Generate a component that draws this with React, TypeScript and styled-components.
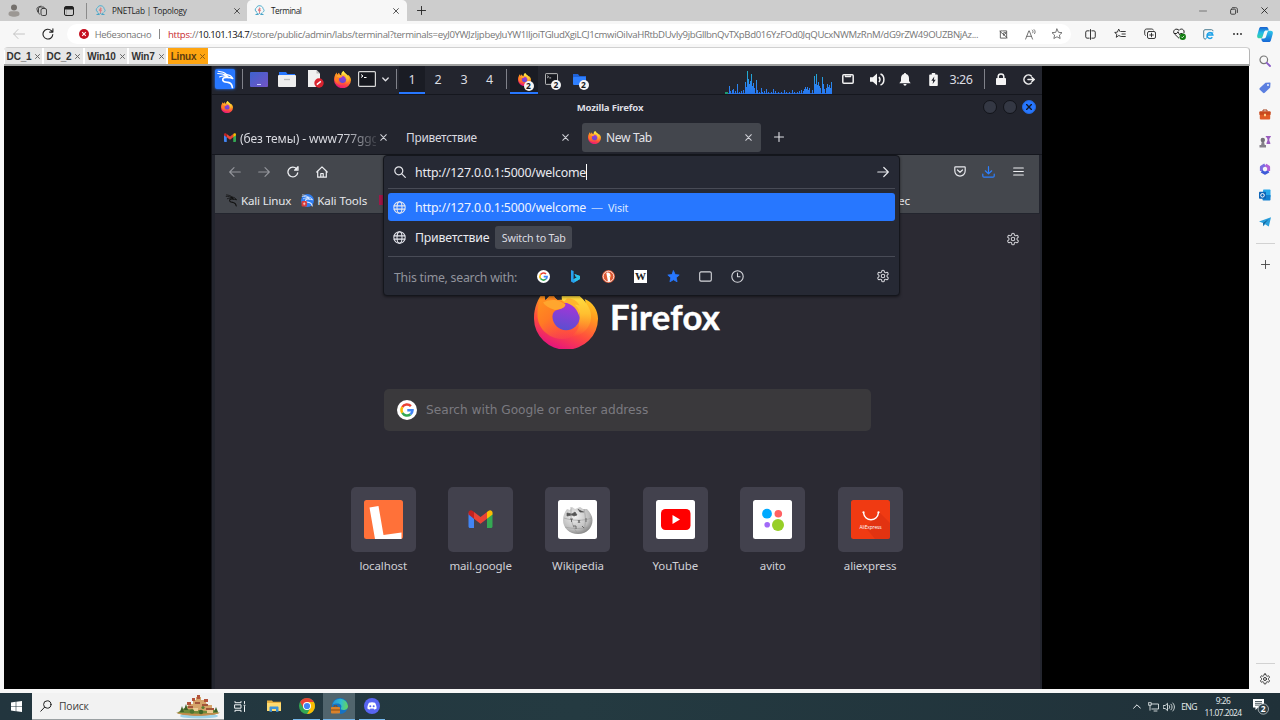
import React from "react";
import styled, { createGlobalStyle } from "styled-components";

const GlobalStyle = createGlobalStyle`
  * { box-sizing: border-box; }
  body { margin: 0; overflow: hidden; background: #f7f7f7; }
  svg { display: block; flex: none; }
`;

const ui = `"Open Sans", "Noto Sans", sans-serif`;
const kali = `"Noto Sans", sans-serif`;

/* ---------- shared parts ---------- */

const Cell = styled.div<{ $w: number; $h?: number }>`
  width: ${(p) => p.$w}px;
  height: ${(p) => (p.$h ? `${p.$h}px` : "100%")};
  flex: none;
  display: flex;
  align-items: center;
  justify-content: center;
`;

const Label = styled.span<{ $size: number; $track?: number; $color?: string; $bold?: boolean }>`
  font-size: ${(p) => p.$size}px;
  letter-spacing: ${(p) => p.$track ?? 0}px;
  color: ${(p) => p.$color ?? "inherit"};
  font-weight: ${(p) => (p.$bold ? 700 : 400)};
  white-space: pre;
`;

const Spacer = styled.div`
  flex: 1;
`;

type IconProps = {
  w?: number;
  h?: number;
  box?: string;
  color?: string;
  sw?: number;
  fill?: string;
  children: React.ReactNode;
};

const Icon = ({ w = 12, h, box = "0 0 24 24", color = "#333", sw = 2, fill = "none", children }: IconProps) => (
  <svg
    width={w}
    height={h ?? w}
    viewBox={box}
    fill={fill}
    stroke={color}
    strokeWidth={sw}
    strokeLinecap="round"
    strokeLinejoin="round"
  >
    {children}
  </svg>
);

const Cross = ({ w = 7, color = "#222", sw = 1 }: { w?: number; color?: string; sw?: number }) => (
  <Icon w={w} box="0 0 8 8" color={color} sw={sw}>
    <path d="M.8.8l6.4 6.4M7.2.8L.8 7.2" />
  </Icon>
);

const Plus = ({ w = 9, color = "#222", sw = 1 }: { w?: number; color?: string; sw?: number }) => (
  <Icon w={w} box="0 0 10 10" color={color} sw={sw}>
    <path d="M5 .5v9M.5 5h9" />
  </Icon>
);

const gearPath =
  "M12.2 2h-.4a2 2 0 0 0-2 2v.2a2 2 0 0 1-1 1.7l-.4.3a2 2 0 0 1-2 0l-.2-.1a2 2 0 0 0-2.7.7l-.2.4a2 2 0 0 0 .7 2.7l.2.1a2 2 0 0 1 1 1.7v.6a2 2 0 0 1-1 1.7l-.2.1a2 2 0 0 0-.7 2.7l.2.4a2 2 0 0 0 2.7.7l.2-.1a2 2 0 0 1 2 0l.4.3a2 2 0 0 1 1 1.7v.2a2 2 0 0 0 2 2h.4a2 2 0 0 0 2-2v-.2a2 2 0 0 1 1-1.7l.4-.3a2 2 0 0 1 2 0l.2.1a2 2 0 0 0 2.7-.7l.2-.4a2 2 0 0 0-.7-2.7l-.2-.1a2 2 0 0 1-1-1.7v-.6a2 2 0 0 1 1-1.7l.2-.1a2 2 0 0 0 .7-2.7l-.2-.4a2 2 0 0 0-2.7-.7l-.2.1a2 2 0 0 1-2 0l-.4-.3a2 2 0 0 1-1-1.7V4a2 2 0 0 0-2-2z";

const Gear = ({ w, color, sw = 2 }: { w: number; color: string; sw?: number }) => (
  <Icon w={w} color={color} sw={sw}>
    <path d={gearPath} />
    <circle cx="12" cy="12" r="3" />
  </Icon>
);

const Globe = () => (
  <Icon w={13} color="#e6e7ee" sw={1.9}>
    <circle cx="12" cy="12" r="10.5" />
    <ellipse cx="12" cy="12" rx="4.6" ry="10.5" />
    <path d="M2 9h20M2 15h20" />
  </Icon>
);

const FirefoxLogo = ({ w, id }: { w: number; id: string }) => (
  <svg width={w} height={w} viewBox="0 0 64 64">
    <defs>
      <linearGradient id={`${id}a`} x1=".75" y1=".05" x2=".35" y2="1">
        <stop offset="0" stopColor="#ffe226" />
        <stop offset=".35" stopColor="#ff9a1f" />
        <stop offset=".68" stopColor="#ff4a3f" />
        <stop offset="1" stopColor="#e5127f" />
      </linearGradient>
      <linearGradient id={`${id}b`} x1=".6" y1="0" x2=".4" y2="1">
        <stop offset="0" stopColor="#a834d8" />
        <stop offset="1" stopColor="#5a4fd0" />
      </linearGradient>
      <linearGradient id={`${id}c`} x1=".5" y1="0" x2=".5" y2="1">
        <stop offset="0" stopColor="#fff04a" />
        <stop offset=".55" stopColor="#ffc030" />
        <stop offset="1" stopColor="#ff8a2a" stopOpacity="0" />
      </linearGradient>
      <linearGradient id={`${id}d`} x1="0" y1="0" x2=".7" y2="1">
        <stop offset="0" stopColor="#ff9a1c" />
        <stop offset=".5" stopColor="#ff7a24" />
        <stop offset="1" stopColor="#ff4f44" stopOpacity=".3" />
      </linearGradient>
    </defs>
    <path
      d="M10 6c0 3 .6 5 1.400 9.500L19 7c.3 3.500 1.500 6.500 4.500 8l6-.5C28 8 31 3 36 0c1 5 5 7 9.500 11 3 2.500 5 5 6 7.500 0-1.500-.2-3-.8-4.500C59 17 64 26 64 33.500A32 31 0 0 1 0 34C-.2 24 3 15 10 6z"
      fill={`url(#${id}a)`}
    />
    <path d="M36 0c1 5 5 7 9.500 11 8 7 12 14 11.500 22-.6 10-9 18-20 19 6-5 9-11 8-18-1-8-8-13-17-19C26.500 8 31 3 36 0z" fill={`url(#${id}c)`} />
    <circle cx="32" cy="31.500" r="13.800" fill={`url(#${id}b)`} />
    <path
      d="M10 6c0 3 .6 5 1.400 9.500L19 7c.3 3.500 1.500 6.500 4.500 8 4.500.2 6 2.500 8 4-1 4-5 5-10 6.500-3 2-3.500 5-3 8 1.500 7 7 11.500 14 12 6 .3 10-2 13-5-2 8-9 14-18 13.500C13 53 3 42 3.500 29 3.700 20 6 13 10 6z"
      fill={`url(#${id}d)`}
    />
    <path d="M9 17.500c5-3 12-3.200 16-1.500 3 1 5 2.500 6.500 3.500-.5 4-6 4.500-10.500 5.500C15 23 11 21 9 17.500z" fill="#ffa62e" />
    <path d="M33 13.500c5-.5 10 2 12.800 7.200-2-1-3.800-1.200-5-1 4 3 5.500 8 4.700 13-1.500-8-6.500-14-16-15.500z" fill="#ffb52e" />
  </svg>
);

const GoogleG = ({ w }: { w: number }) => (
  <svg width={w} height={w} viewBox="0 0 20 20" fill="none" strokeWidth="2.500">
    <circle cx="10" cy="10" r="10" fill="#fff" />
    <path d="M13.900 6.200A5.500 5.500 0 0 0 5.300 7.200" stroke="#ea4335" />
    <path d="M5.300 7.200a5.500 5.500 0 0 0 0 5.700" stroke="#fbbc05" />
    <path d="M5.300 12.900a5.500 5.500 0 0 0 8.200 1.300" stroke="#34a853" />
    <path d="M13.500 14.200c1.300-1 2-2.500 2-4H10.300" stroke="#4285f4" />
  </svg>
);

const GmailM = ({ w, h }: { w: number; h: number }) => (
  <svg width={w} height={h} viewBox="0 0 24 18">
    <path d="M0 3v13.500c0 .8.700 1.500 1.600 1.500H5.500V8.500z" fill="#4285f4" />
    <path d="M24 3v13.500c0 .8-.7 1.500-1.600 1.500h-3.900V8.500z" fill="#34a853" />
    <path d="M5.500 2L12 7l6.500-5v6.700L12 13.700 5.500 8.700z" fill="#ea4335" />
    <path d="M0 4.600L5.500 8.700V2L4.200.9C2.500-.5 0 .5 0 2.600z" fill="#c5221f" />
    <path d="M24 4.600l-5.500 4.100V2L19.800.9C21.500-.5 24 .5 24 2.600z" fill="#fbbc04" />
  </svg>
);

const DragonLines = ({ color }: { color: string }) => (
  <g fill="none" stroke={color} strokeLinecap="round" strokeLinejoin="round">
    <path d="M2 4c4 0 7 .6 9.500 2.300M4 8c3-1.200 6-1.300 8.500-.3M2.500 1.500c4 .3 7.500 1.500 10 3.800" strokeWidth="1.300" />
    <path d="M10 5.500c2 .5 3.500 1.700 4 3.200-4-.6-6.500.6-6.200 3 .4 2.300 3.300 2.300 6 2.600 3.200.4 4.700 2.200 5.200 6" strokeWidth="1.900" />
    <path d="M12.500 5.300c3 .3 5.500 1.700 7 4.700-1.500-.8-3.500-1.300-5.500-1.300" strokeWidth="1.500" />
  </g>
);

/* ---------- browser chrome ---------- */

const Screen = styled.div`
  width: 1280px;
  height: 720px;
  display: flex;
  flex-direction: column;
  overflow: hidden;
  background: #f7f7f7;
  font-family: ${ui};
`;

const TabStrip = styled.div`
  height: 21px;
  flex: none;
  display: flex;
  align-items: center;
  background: #cdcdcd;
  color: #1d1d1d;
`;

const StripDivider = styled.div`
  width: 1px;
  height: 16px;
  background: #8b8b8b;
`;

const EdgeTab = styled.div<{ $w: number; $active?: boolean }>`
  width: ${(p) => p.$w}px;
  height: 21px;
  flex: none;
  display: flex;
  align-items: center;
  border-radius: 5px 5px 0 0;
  background: ${(p) => (p.$active ? "#f7f7f7" : "transparent")};
`;

const Toolbar = styled.div`
  height: 26px;
  flex: none;
  display: flex;
  align-items: center;
  background: #f7f7f7;
`;

const AddressPill = styled.div`
  width: 1004px;
  height: 20px;
  flex: none;
  display: flex;
  align-items: center;
  border-radius: 10px;
  background: #fff;
  padding-left: 9px;
  color: #767676;
`;

const UrlText = styled.div`
  width: 822px;
  flex: none;
  display: flex;
  align-items: center;
`;

const PillDivider = styled.div`
  width: 1px;
  height: 10px;
  background: #888;
`;

const PnetIcon = () => (
  <svg width="11" height="11" viewBox="0 0 22 22" fill="none">
    <path d="M6 14a4.500 4.500 0 0 1-1-8.500C6 2 9.500 1 12 1.500c4 .5 6 3 6 6 3 1 3 6-.5 6.800" stroke="#55b0cf" strokeWidth="2" />
    <path d="M11 5v12M8 8l6 4M14 7l-6 5" stroke="#e07a80" strokeWidth="1.800" />
    <path d="M3 19h5l3-2 3 2h5M5 16l3 1M17 16l-3 1" stroke="#4aa5c8" strokeWidth="2" />
  </svg>
);

const EdgeTabStrip = () => (
  <TabStrip>
    <Cell $w={28}>
      <svg width="12" height="13" viewBox="0 0 12 13">
        <circle cx="6" cy="3.500" r="3" fill="#74706c" />
        <path d="M.5 10c0-2 1-2.800 2.500-2.800h6c1.500 0 2.500.8 2.500 2.800s-2.500 2.700-5.500 2.700S.5 12 .5 10z" fill="#9c9894" />
      </svg>
    </Cell>
    <Cell $w={27}>
      <Icon w={12} color="#333" sw={1.800}>
        <rect x="10" y="7" width="11" height="14" rx="3" />
        <path d="M7 18c-1.500-.5-2-1.500-2-3V8c0-3 1-4 4-4h5c1.500 0 2.500.5 3 1.500M3.500 14L2 8.500C1.500 6 3 4.500 5 4l5-1.700" />
      </Icon>
    </Cell>
    <Cell $w={28}>
      <svg width="10" height="10" viewBox="0 0 10 10">
        <rect x=".5" y=".5" width="9" height="9" rx="1.500" fill="none" stroke="#222" />
        <rect x="1" y="1" width="8" height="2.500" fill="#222" />
        <path d="M2.500 4v5" stroke="#999" strokeWidth=".6" />
      </svg>
    </Cell>
    <Cell $w={7}>
      <StripDivider />
    </Cell>
    <EdgeTab $w={157}>
      <Cell $w={20}>
        <PnetIcon />
      </Cell>
      <Cell $w={2} />
      <Label $size={8.2} $track={-0.16}>PNETLab | Topology</Label>
      <Spacer />
      <Cell $w={21}>
        <Cross w={6} />
      </Cell>
    </EdgeTab>
    <EdgeTab $w={160} $active>
      <Cell $w={24}>
        <PnetIcon />
      </Cell>
      <Label $size={8.2} $track={-0.4}>Terminal</Label>
      <Spacer />
      <Cell $w={22}>
        <Cross w={6} />
      </Cell>
    </EdgeTab>
    <Cell $w={28}>
      <Plus w={9} />
    </Cell>
    <Spacer />
    <Cell $w={30}>
      <Icon w={8} h={2} box="0 0 8 2" color="#777" sw={1}>
        <path d="M.5 1h7" />
      </Icon>
    </Cell>
    <Cell $w={31}>
      <Icon w={8} box="0 0 8 8" color="#333" sw={0.9}>
        <rect x=".6" y="2.200" width="5" height="5" rx="1" />
        <path d="M2.500.7h3.200c1 0 1.700.6 1.700 1.600v3.200" />
      </Icon>
    </Cell>
    <Cell $w={31}>
      <Cross w={7} />
    </Cell>
  </TabStrip>
);

const EdgeToolbar = () => (
  <Toolbar>
    <Cell $w={37}>
      <Icon w={12} box="0 0 12 12" color="#c4c4c4" sw={1}>
        <path d="M11.500 6H.8M5 1.500L.7 6 5 10.500" />
      </Icon>
    </Cell>
    <Cell $w={22}>
      <Icon w={12} box="0 0 12 12" color="#222" sw={1.100}>
        <path d="M10.800 6.500A4.900 4.900 0 1 1 9.300 2.600L10.800 4M10.900.8v3.300H7.600" />
      </Icon>
    </Cell>
    <Cell $w={8} />
    <AddressPill>
      <Cell $w={16}>
        <svg width="10" height="10" viewBox="0 0 10 10">
          <circle cx="5" cy="5" r="5" fill="#c50f1f" />
          <path d="M3.200 3.200l3.600 3.600M6.800 3.200L3.200 6.800" stroke="#fff" strokeWidth="1.100" />
        </svg>
      </Cell>
      <Cell $w={3} />
      <Cell $w={56}>
        <Label $size={9.3} $track={-0.3}>Небезопасно</Label>
      </Cell>
      <Cell $w={17}>
        <PillDivider />
      </Cell>
      <UrlText>
        <Label $size={9.6} $track={-0.3} $color="#c8282f">https:</Label>
        <Label $size={9.6} $track={-0.3}>//</Label>
        <Label $size={9.6} $track={-0.5} $color="#111">10.101.134.7</Label>
        <Label $size={9.6} $track={-0.35}>/store/public/admin/labs/terminal?terminals=eyJ0YWJzIjpbeyJuYW1lIjoiTGludXgiLCJ1cmwiOiIvaHRtbDUvIy9jbGllbnQvTXpBd016YzFOd0JqQUcxNWMzRnM/dG9rZW49OUZBNjAz...</Label>
      </UrlText>
      <Spacer />
      <Cell $w={27}>
        <Icon w={9} box="0 0 10 10" color="#555" sw={1}>
          <path d="M4 1h4.500v8h-7V1H3M1 1.500l8 7M5.500 3H8L5 6V4" />
        </Icon>
      </Cell>
      <Cell $w={27}>
        <Icon w={11} box="0 0 12 12" color="#555" sw={0.9}>
          <path d="M.7 11L4.200 2h.5l3.500 9M2 8h4.800M8 1.200c1 .8 1 2.200.4 3M10 .7c1.300 1.300 1.300 3 .5 4.300" />
        </Icon>
      </Cell>
      <Cell $w={26}>
        <Icon w={12} color="#555" sw={1.600}>
          <path d="M12 2l3 6.600 7 .8-5.200 4.800L18.300 21 12 17.500 5.700 21l1.500-6.800L2 9.400l7-.8z" />
        </Icon>
      </Cell>
      <Cell $w={3} />
    </AddressPill>
    <Cell $w={4} />
    <Cell $w={30}>
      <Icon w={11} box="0 0 12 12" color="#222" sw={1}>
        <path d="M4.500 2H2.200C1.400 2 .8 2.600.8 3.400v5.200c0 .8.600 1.400 1.400 1.400h2.300M7.500 2h2.300c.8 0 1.400.6 1.400 1.400v5.200c0 .8-.6 1.400-1.400 1.400H7.500M6 .6v10.800" />
      </Icon>
    </Cell>
    <Cell $w={30}>
      <Icon w={12} box="0 0 12 12" color="#222" sw={0.9}>
        <path d="M7 3.500h4.300M8 6h3.300M7.500 8.500h3.800M6.500 8.300L4.800 7.500 2.300 9.300l.5-3L.7 4.500l2.700-.4 1.300-3 1.300 2.400" />
      </Icon>
    </Cell>
    <Cell $w={30}>
      <Icon w={12} box="0 0 12 12" color="#222" sw={0.9}>
        <rect x="3.500" y="3.500" width="8" height="7" rx="1.500" />
        <path d="M7.500 5.200v3.600M5.700 7h3.600M1.500 7.500C.8 7 .7 6.500.7 5.800V3c0-1.200.700-2 2-2h5c.8 0 1.300.3 1.600 1" />
      </Icon>
    </Cell>
    <Cell $w={28}>
      <svg width="13" height="12" viewBox="0 0 13 12" fill="none">
        <path d="M6 10.300L1.400 5.800C-.5 3.500 1.500.8 4 1.200c1 .1 1.500.6 2 1.200C7.500.5 10 .7 10.900 2.700c.3 1 .3 1.800-.1 2.600M1 5.500h2.700L5 3.700l1.500 3 1-1.200h2" stroke="#222" />
        <circle cx="9.700" cy="8.700" r="3.200" fill="#107c10" />
        <path d="M8.200 8.700l1.100 1.100 1.900-2" stroke="#fff" strokeWidth=".8" />
      </svg>
    </Cell>
    <Cell $w={30}>
      <svg width="11" height="11" viewBox="0 0 11 11" fill="none">
        <path d="M3 10H2C1.300 10 .7 9.500.7 8.700V2C.7 1.200 1.300.7 2 .7h6.500c.8 0 1.500.5 1.500 1.300" stroke="#4d7d92" />
        <path d="M9.300 8.200a2.900 2.900 0 1 1 .5-2.200H4.500" stroke="#1ba1e8" strokeWidth="1.500" />
        <path d="M3 10c1-3.500 4-6.500 7.500-7" stroke="#1ba1e8" strokeWidth=".7" />
      </svg>
    </Cell>
    <Cell $w={28}>
      <Icon w={9} h={2} box="0 0 9 2" color="none" fill="#222">
        <circle cx="1" cy="1" r=".9" />
        <circle cx="4.500" cy="1" r=".9" />
        <circle cx="8" cy="1" r=".9" />
      </Icon>
    </Cell>
    <Cell $w={28}>
      <svg width="16" height="15" viewBox="0 0 16 15">
        <defs>
          <linearGradient id="cpA" x1="0" y1="0" x2="0" y2="1">
            <stop offset="0" stopColor="#1b5fd0" />
            <stop offset=".5" stopColor="#22b8e6" />
            <stop offset="1" stopColor="#39d5a0" />
          </linearGradient>
          <linearGradient id="cpB" x1="0" y1="0" x2="0" y2="1">
            <stop offset="0" stopColor="#2cc8ea" />
            <stop offset="1" stopColor="#1767d6" />
          </linearGradient>
        </defs>
        <path d="M4 0h5c1.400 0 2 .6 2.400 2l.4 1.500H9c-1 0-1.600.5-2 1.700L5.500 10c-.3 1-.9 1.300-2 1.300H2.300C.5 11.300-.2 10 .3 8L2 2C2.400.6 3 0 4 0z" fill="url(#cpA)" />
        <path d="M12 15H7c-1.400 0-2-.6-2.400-2l-.4-1.500H7c1 0 1.600-.5 2-1.700L10.500 5c.3-1 .9-1.300 2-1.300h1.200c1.800 0 2.500 1.300 2 3.300L14 13c-.4 1.400-1 2-2 2z" fill="url(#cpB)" />
      </svg>
    </Cell>
  </Toolbar>
);

/* ---------- page body and Edge sidebar ---------- */

const Body = styled.div`
  height: 646px;
  flex: none;
  display: flex;
`;

const PageColumn = styled.div`
  width: 1250px;
  flex: none;
  padding-left: 4px;
  display: flex;
  flex-direction: column;
`;

const PnetBar = styled.div`
  height: 19px;
  flex: none;
  display: flex;
  align-items: stretch;
  gap: 2px;
  padding-left: 1px;
  background: #fff;
  border-top: 1px solid #d0d0d0;
  border-right: 1px solid #b5b5b5;
  border-bottom: 2px solid #a0a1a0;
  border-radius: 4px 4px 0 0;
`;

const PnetTab = styled.div<{ $w: number; $active?: boolean }>`
  width: ${(p) => p.$w}px;
  display: flex;
  align-items: center;
  justify-content: center;
  gap: 4px;
  background: ${(p) => (p.$active ? "#ffa510" : "#e7e7e7")};
  color: ${(p) => (p.$active ? "#5c3c10" : "#333")};
  font: 700 10px "Liberation Sans", sans-serif;
  letter-spacing: -0.2px;
`;

const Stage = styled.div`
  width: 1245px;
  height: 623px;
  flex: none;
  display: flex;
  background: #000;
  padding-left: 207px;
`;

const SideBar = styled.div`
  width: 30px;
  flex: none;
  padding-top: 1px;
  display: flex;
  flex-direction: column;
  align-items: center;
  background: #f7f7f7;
`;

const SideSlot = styled.div<{ $h?: number }>`
  height: ${(p) => p.$h ?? 26.8}px;
  flex: none;
  display: flex;
  align-items: center;
`;

const SideRule = styled.div`
  width: 19px;
  height: 1px;
  background: #d2d2d2;
`;

const EdgeSideBar = () => (
  <SideBar>
    <SideSlot>
      <Icon w={12} box="0 0 12 12" color="#777" sw={1.200}>
        <circle cx="4.800" cy="4.800" r="3.800" />
        <path d="M7.800 7.800L11 11" stroke="#8a5bc7" strokeWidth="1.800" />
      </Icon>
    </SideSlot>
    <SideSlot>
      <svg width="12" height="12" viewBox="0 0 12 12">
        <path d="M6.500.8L11 .5c.3 0 .5.200.5.500l-.3 4.500-5.500 5.300c-.6.5-1.200.5-1.700 0L.8 7.800c-.5-.5-.5-1.200 0-1.800z" fill="#5b7fe0" />
        <circle cx="9" cy="3" r=".9" fill="#fff" />
      </svg>
    </SideSlot>
    <SideSlot>
      <svg width="12" height="11" viewBox="0 0 12 11">
        <path d="M4 2.500V1h4v1.500" stroke="#a33a14" fill="none" />
        <rect x=".3" y="2.300" width="11.400" height="4" rx="1" fill="#c8481c" />
        <rect x=".8" y="5.800" width="10.400" height="4.700" rx="1" fill="#e05a25" />
        <rect x="5" y="4.800" width="2" height="2.400" fill="#ffd28a" />
      </svg>
    </SideSlot>
    <SideSlot>
      <svg width="12" height="12" viewBox="0 0 12 12">
        <circle cx="3.800" cy="4" r="2.200" fill="#75717a" />
        <path d="M2.700 6h2.400l.6 3H7v2.500H.5V9h1.600z" fill="#85818a" />
        <path d="M6.800 0h5v1.300h-.6L10.300 3v1.500l1 2.500v1H7.500V7l1-2.500V3l-1-1.700h-.7z" fill="#9a5cc0" />
      </svg>
    </SideSlot>
    <SideSlot>
      <svg width="12" height="12" viewBox="0 0 12 12" fill="none" strokeWidth="3">
        <path d="M6 1.900L2.400 4v4" stroke="#7a6be0" strokeLinejoin="round" />
        <path d="M2.500 8.200L6 10.200l3.600-2" stroke="#3f5bd8" strokeLinejoin="round" />
        <path d="M9.600 8V4L6.500 2" stroke="#b060d8" strokeLinejoin="round" />
      </svg>
    </SideSlot>
    <SideSlot>
      <svg width="12" height="12" viewBox="0 0 12 12">
        <rect x="4" y=".5" width="7.500" height="8" rx=".8" fill="#28a8ea" />
        <path d="M3.500 6h8v4.700c0 .5-.3.800-.8.800H4.300c-.5 0-.8-.3-.8-.8z" fill="#1480cf" />
        <rect x="0" y="2.800" width="7" height="7" rx=".8" fill="#0f66b8" />
        <circle cx="3.500" cy="6.300" r="1.800" fill="none" stroke="#fff" />
      </svg>
    </SideSlot>
    <SideSlot>
      <svg width="12" height="10" viewBox="0 0 12 10">
        <path d="M0 4.500L12 .3 9.800 9.600 6 7.200 4.500 9.200 4 6z" fill="#2a9fdc" />
        <path d="M4 6l6-4.200L5.500 6.800 4.500 9.200z" fill="#14639c" />
      </svg>
    </SideSlot>
    <SideSlot $h={7} />
    <SideRule />
    <SideSlot $h={42}>
      <Plus w={9} color="#444" />
    </SideSlot>
    <Spacer />
    <SideRule />
    <SideSlot $h={29}>
      <Gear w={12} color="#333" sw={2} />
    </SideSlot>
  </SideBar>
);

/* ---------- Kali desktop ---------- */

const Desktop = styled.div`
  width: 831px;
  height: 623px;
  display: flex;
  flex-direction: column;
  background: #23252e;
  border-left: 1px solid #101116;
  font-family: ${kali};
  color: #dcdde2;
`;

const Panel = styled.div`
  height: 29px;
  flex: none;
  display: flex;
  align-items: center;
  padding-right: 1px;
  background: #23252e;
  border-bottom: 1px solid #15171e;
`;

const PanelCell = styled(Cell)<{ $on?: boolean }>`
  height: 28px;
  background: ${(p) => (p.$on ? "#1a1c24" : "transparent")};
  border-bottom: 2px solid ${(p) => (p.$on ? "#2777ff" : "transparent")};
`;

const PanelRule = styled.div`
  width: 1px;
  height: 20px;
  background: #80828a;
`;

const KaliBadge = styled.div`
  width: 20px;
  height: 20px;
  border-radius: 2px;
  background: #2777ff;
  box-shadow: 0 0 3px #2777ff;
  display: flex;
  align-items: center;
  justify-content: center;
`;

const Counted = styled.div`
  position: relative;
  display: flex;
`;

const CountBadge = styled.span`
  position: absolute;
  right: -3px;
  bottom: -5px;
  width: 10px;
  height: 10px;
  border-radius: 50%;
  background: #f5f5f5;
  color: #16181e;
  font: 700 8.500px/10px "Noto Sans", sans-serif;
  text-align: center;
`;

const Terminal = ({ w, h }: { w: number; h: number }) => (
  <svg width={w} height={h} viewBox="0 0 18 16">
    <rect x=".6" y=".6" width="16.800" height="14.800" rx="1" fill="#16181f" stroke="#d8d8d8" strokeWidth="1.200" />
    <path d="M3 3.500l2 1.500-2 1.500M6 6.500h2.500" stroke="#fff" strokeWidth="1" fill="none" />
  </svg>
);

const cpuBars: [number, number][] = [
  [4, 8], [5, 3], [7, 4], [8, 5], [10, 3], [12, 10], [14, 2], [16, 3], [18, 4], [20, 12], [21, 7], [22, 23], [23, 15],
  [24, 10], [25, 13], [26, 20], [27, 8], [28, 11], [29, 6], [31, 14], [32, 4], [34, 2], [36, 6], [37, 2], [39, 3],
  [41, 5], [43, 2], [46, 2], [48, 5], [50, 3], [53, 2], [56, 2], [59, 4], [61, 2], [64, 2], [67, 4], [69, 2], [72, 2],
  [74, 3], [76, 4], [78, 3], [79, 5], [80, 7], [81, 5], [82, 7], [83, 4], [84, 6], [87, 4], [89, 18], [90, 10],
  [91, 20], [92, 9], [93, 12], [94, 8], [95, 6], [97, 17], [98, 10], [99, 5], [101, 6], [102, 10], [103, 7], [104, 9],
  [105, 6], [106, 12],
];

const CpuGraph = () => (
  <svg width="107" height="28" viewBox="0 0 107 28" shapeRendering="crispEdges">
    <defs>
      <linearGradient id="cpu" gradientUnits="userSpaceOnUse" x1="0" y1="5" x2="0" y2="28">
        <stop offset="0" stopColor="#1fb7c8" />
        <stop offset=".6" stopColor="#2b86f0" />
        <stop offset="1" stopColor="#2777f0" />
      </linearGradient>
    </defs>
    <rect x="3" y="26.500" width="104" height="1.500" fill="#2f66c8" />
    <rect x="0" y="26" width="3" height="2" fill="#1f9a70" />
    {cpuBars.map(([x, h]) => (
      <rect key={x} x={x} y={28 - h} width="1" height={h} fill="url(#cpu)" />
    ))}
  </svg>
);

const DesktopPanel = () => (
  <Panel>
    <PanelCell $w={26}>
      <KaliBadge>
        <svg width="19" height="19" viewBox="0 0 22 22">
          <DragonLines color="#fff" />
        </svg>
      </KaliBadge>
    </PanelCell>
    <PanelCell $w={8}><PanelRule /></PanelCell>
    <PanelCell $w={26}>
      <svg width="18" height="15" viewBox="0 0 18 15">
        <defs>
          <linearGradient id="dsk" x1="0" x2="1" y2="1">
            <stop offset="0" stopColor="#3d62cf" />
            <stop offset="1" stopColor="#7354c4" />
          </linearGradient>
        </defs>
        <rect width="18" height="15" rx="1" fill="url(#dsk)" />
        <path d="M7 12.500h4" stroke="#c8d4ff" />
      </svg>
    </PanelCell>
    <PanelCell $w={30}>
      <svg width="18" height="16" viewBox="0 0 18 16">
        <path d="M1 1h7l1.500 2H17v4H1z" fill="#2777ff" />
        <rect x="0" y="4" width="18" height="12" rx="1" fill="#eeeeee" />
        <path d="M6 8.500h6" stroke="#bbb" strokeWidth="1.300" />
      </svg>
    </PanelCell>
    <PanelCell $w={26}>
      <svg width="17" height="18" viewBox="0 0 17 18">
        <path d="M1 0h8.500L13 3.500V17H1z" fill="#f0f0f0" />
        <path d="M9.500 0v3.500H13z" fill="#bbb" />
        <circle cx="12" cy="13" r="4.700" fill="#d8232f" />
        <path d="M9.800 14.600l4-3.200" stroke="#fff" strokeWidth="1.400" />
      </svg>
    </PanelCell>
    <PanelCell $w={28}><FirefoxLogo w={17} id="fp" /></PanelCell>
    <PanelCell $w={21}><Terminal w={18} h={16} /></PanelCell>
    <PanelCell $w={16}>
      <Icon w={7} h={5} box="0 0 7 5" color="#e2e2e6" sw={1.300}>
        <path d="M.8 1l2.700 2.700L6.200 1" />
      </Icon>
    </PanelCell>
    <PanelCell $w={6}><PanelRule /></PanelCell>
    <PanelCell $w={26} $on><Label $size={12.5}>1</Label></PanelCell>
    <PanelCell $w={26}><Label $size={12.5}>2</Label></PanelCell>
    <PanelCell $w={26}><Label $size={12.5}>3</Label></PanelCell>
    <PanelCell $w={25}><Label $size={12.5}>4</Label></PanelCell>
    <PanelCell $w={8}><PanelRule /></PanelCell>
    <PanelCell $w={28} $on>
      <Counted>
        <FirefoxLogo w={13} id="ft" />
        <CountBadge>2</CountBadge>
      </Counted>
    </PanelCell>
    <PanelCell $w={27}>
      <Counted>
        <Terminal w={13} h={12} />
        <CountBadge>2</CountBadge>
      </Counted>
    </PanelCell>
    <PanelCell $w={28}>
      <Counted>
        <svg width="13" height="12" viewBox="0 0 13 12">
          <path d="M0 1h5l1.500 2H13v9H1.500L0 5z" fill="#1f62d8" />
          <rect x="0" y="4" width="13" height="8" rx="1" fill="#2f80ff" />
        </svg>
        <CountBadge>2</CountBadge>
      </Counted>
    </PanelCell>
    <Spacer />
    <CpuGraph />
    <PanelCell $w={32}>
      <Icon w={12} h={10} box="0 0 12 10" color="#f0f0f0" sw={1.500}>
        <rect x=".8" y=".8" width="10.400" height="8.400" rx="1" />
        <path d="M3.500 2v.5h5V2" />
      </Icon>
    </PanelCell>
    <PanelCell $w={26}>
      <svg width="15" height="13" viewBox="0 0 15 13" fill="none">
        <path d="M0 4.300h2.800L7 .5v12L2.800 8.700H0z" fill="#f4f4f4" />
        <path d="M9 4c1 1.300 1 3.700 0 5M10.500 1c4.500 1.500 4.500 9.500 0 11" stroke="#f4f4f4" strokeWidth="1.500" />
      </svg>
    </PanelCell>
    <PanelCell $w={30}>
      <svg width="12" height="13" viewBox="0 0 12 13" fill="#f4f4f4">
        <path d="M6 0c.7 0 1 .4 1 1 2 .5 3 2 3 4.200V8l1.700 2.300H.3L2 8V5.200C2 3 3 1.500 5 1c0-.6.300-1 1-1zM4.500 11h3c0 1-.6 1.700-1.500 1.700S4.500 12 4.500 11z" />
      </svg>
    </PanelCell>
    <PanelCell $w={26}>
      <svg width="9" height="13" viewBox="0 0 9 13">
        <path d="M2.800 0h3.400v1.500H8c.5 0 .8.300.8.800v9.900c0 .5-.3.800-.8.800H1c-.5 0-.8-.3-.8-.8V2.300c0-.5.3-.8.800-.8h1.800z" fill="#f4f4f4" />
        <path d="M5.300 3.500L2.300 7.800h1.800L3.700 11l3-4.300H4.900z" fill="#23252e" />
      </svg>
    </PanelCell>
    <PanelCell $w={30}><Label $size={12.5} $track={-0.5}>3:26</Label></PanelCell>
    <PanelCell $w={16}><PanelRule /></PanelCell>
    <PanelCell $w={18}>
      <svg width="10" height="12" viewBox="0 0 10 12">
        <rect x="0" y="5" width="10" height="7" rx=".8" fill="#f4f4f4" />
        <path d="M2.200 5.500V3.500c0-3.500 5.600-3.500 5.600 0v2" fill="none" stroke="#f4f4f4" strokeWidth="1.500" />
      </svg>
    </PanelCell>
    <Cell $w={7} />
    <PanelCell $w={24}>
      <Icon w={12} h={11} box="0 0 12 11" color="#f0f0f0" sw={1.600}>
        <path d="M8.300 2A4.500 4.500 0 1 0 8.300 9M5 5.500h6M9 3.500l2.200 2L9 7.500" />
      </Icon>
    </PanelCell>
  </Panel>
);

const TitleBar = styled.div`
  height: 24px;
  flex: none;
  display: flex;
  align-items: center;
  padding-right: 0.500px;
`;

const TitleText = styled.div`
  width: 702px;
  height: 24px;
  padding-left: 34px;
  display: flex;
  align-items: center;
  justify-content: center;
`;

const Round = styled.div<{ $close?: boolean }>`
  width: 14px;
  height: 14px;
  border-radius: 50%;
  margin-right: 5.500px;
  display: flex;
  align-items: center;
  justify-content: center;
  background: ${(p) => (p.$close ? "#2777ff" : "#343844")};
  border: 1px solid ${(p) => (p.$close ? "#2468dc" : "#12141a")};
`;

const FxTabs = styled.div`
  height: 36px;
  flex: none;
  display: flex;
  align-items: center;
  padding: 1px 0 0 2px;
  border-bottom: 1px solid #15171e;
`;

const FxTab = styled.div<{ $w: number; $active?: boolean }>`
  width: ${(p) => p.$w}px;
  height: 29px;
  flex: none;
  display: flex;
  align-items: center;
  border-radius: 3px;
  background: ${(p) => (p.$active ? "#43464d" : "transparent")};
`;

const FadedTitle = styled.div`
  width: 137px;
  padding-left: 1px;
  mask-image: linear-gradient(90deg, #000 76%, rgba(0, 0, 0, 0.15) 100%);
`;

const FxNav = styled.div`
  position: relative;
  height: 58px;
  flex: none;
  margin: 0 3px;
  display: flex;
  flex-direction: column;
  background: #44474d;
`;

const NavRow = styled.div`
  height: 33px;
  flex: none;
  display: flex;
  align-items: center;
`;

const BookmarkRow = styled.div`
  height: 25px;
  flex: none;
  display: flex;
  align-items: center;
  padding-left: 10px;
`;

const Dropdown = styled.div`
  position: absolute;
  left: 168px;
  top: 0;
  width: 517px;
  height: 141px;
  z-index: 2;
  display: flex;
  flex-direction: column;
  background: #262934;
  border: 1px solid #14161c;
  border-radius: 4px;
  box-shadow: 0 1px 3px rgba(0, 0, 0, 0.5);
  padding: 0 4px;
`;

const DropRow = styled.div<{ $h: number; $active?: boolean; $top?: number }>`
  height: ${(p) => p.$h}px;
  flex: none;
  margin-top: ${(p) => p.$top ?? 0}px;
  display: flex;
  align-items: center;
  border-radius: 3px;
  background: ${(p) => (p.$active ? "#2777ff" : "transparent")};
`;

const DropRule = styled.div<{ $top?: number }>`
  height: 1px;
  flex: none;
  margin-top: ${(p) => p.$top ?? 0}px;
  background: #484b56;
`;

const Caret = styled.div`
  width: 1px;
  height: 16px;
  background: #fff;
`;

const SwitchButton = styled.div`
  width: 77px;
  height: 23px;
  margin-left: 6px;
  border-radius: 3px;
  background: #444750;
  display: flex;
  align-items: center;
  justify-content: center;
`;

const WikiSquare = styled.div`
  width: 13px;
  height: 13px;
  background: #fff;
  color: #222;
  font: 700 11px/13px "Liberation Serif", serif;
  text-align: center;
`;

const SearchWith = styled.div`
  width: 133px;
  flex: none;
`;

const UrlDropdown = () => (
  <Dropdown>
    <DropRow $h={32}>
      <Cell $w={23}>
        <Icon w={12} box="0 0 12 12" color="#e4e5ea" sw={1.200}>
          <circle cx="4.800" cy="4.800" r="4" />
          <path d="M7.800 7.800l3.500 3.500" />
        </Icon>
      </Cell>
      <Cell $w={4} />
      <Label $size={12.4} $track={-0.22} $color="#e9eaf0">http://127.0.0.1:5000/welcome</Label>
      <Caret />
      <Spacer />
      <Cell $w={24}>
        <Icon w={12} box="0 0 12 12" color="#e4e5ea" sw={1.200}>
          <path d="M.8 6h10.400M6.800 1.500L11.300 6l-4.500 4.500" />
        </Icon>
      </Cell>
    </DropRow>
    <DropRule />
    <DropRow $h={28} $top={4} $active>
      <Cell $w={23}><Globe /></Cell>
      <Cell $w={4} />
      <Label $size={12.4} $track={-0.22} $color="#eef3ff">http://127.0.0.1:5000/welcome</Label>
      <Cell $w={22}><Label $size={12} $color="#a9c8ff">—</Label></Cell>
      <Label $size={10.8} $track={-0.2} $color="#dbe8ff">Visit</Label>
    </DropRow>
    <DropRow $h={33}>
      <Cell $w={23}><Globe /></Cell>
      <Cell $w={4} />
      <Label $size={12.3} $track={-0.2} $color="#e9eaf0">Приветствие</Label>
      <SwitchButton><Label $size={10.7} $track={-0.18} $color="#dcdde2">Switch to Tab</Label></SwitchButton>
    </DropRow>
    <DropRule $top={2} />
    <DropRow $h={38}>
      <Cell $w={6} />
      <SearchWith><Label $size={12.3} $track={-0.24} $color="#92949d">This time, search with:</Label></SearchWith>
      <Cell $w={32}><GoogleG w={13} /></Cell>
      <Cell $w={33}>
        <svg width="9" height="13" viewBox="0 0 9 13">
          <path d="M0 0l2.600 1v8.200L6 7.200 4.500 6.500 3.500 4 9 6v3L2.600 13 0 11.500z" fill="#27a0ee" />
          <path d="M3.500 4L9 6v3l-4.500 2.600L2.600 9.200 6 7.200 4.500 6.500z" fill="#2cc3ea" />
        </svg>
      </Cell>
      <Cell $w={32}>
        <svg width="13" height="13" viewBox="0 0 13 13">
          <circle cx="6.500" cy="6.500" r="6.500" fill="#de5833" />
          <circle cx="6.500" cy="6.500" r="5.300" fill="none" stroke="#fff" strokeWidth=".8" />
          <path d="M4.300 3c2-1 4.200 0 4.200 2.500 0 1.500-.6 2-.5 3.500l.3 2.500-2.300.3z" fill="#fff" />
          <path d="M7.300 6.300l2 .4-1.800.6z" fill="#fdd20a" />
        </svg>
      </Cell>
      <Cell $w={33}>
        <WikiSquare>W</WikiSquare>
      </Cell>
      <Cell $w={32}>
        <Icon w={13} color="#2777ff" fill="#2777ff" sw={1.500}>
          <path d="M12 1.500l3.200 7 7.300.8-5.500 5 1.600 7.500L12 18l-6.600 3.800L7 14.300l-5.500-5 7.300-.8z" />
        </Icon>
      </Cell>
      <Cell $w={33}>
        <Icon w={13} h={11} box="0 0 13 11" color="#d6d7dc" sw={1.100}>
          <rect x=".7" y=".9" width="11.600" height="9.200" rx="1.300" />
        </Icon>
      </Cell>
      <Cell $w={31}>
        <Icon w={13} box="0 0 13 13" color="#d6d7dc" sw={1.100}>
          <circle cx="6.500" cy="6.500" r="5.700" />
          <path d="M6.500 3v3.700h2.500" />
        </Icon>
      </Cell>
      <Spacer />
      <Cell $w={24}><Gear w={14} color="#d6d7dc" sw={1.800} /></Cell>
    </DropRow>
  </Dropdown>
);

const NewTabPage = styled.div`
  flex: 1;
  margin: 1px 2px 0 3px;
  background: #2b2a33;
  display: flex;
  flex-direction: column;
`;

const TopCorner = styled.div`
  height: 71px;
  flex: none;
  display: flex;
  justify-content: flex-end;
  align-items: flex-start;
  padding: 18px 20px 0 0;
`;

const LogoRow = styled.div`
  height: 64px;
  flex: none;
  display: flex;
  align-items: center;
  padding-left: 319px;
  gap: 12px;
`;

const WordMark = styled.span`
  font: 700 34.500px/64px Lato, sans-serif;
  letter-spacing: 0.350px;
  color: #fff;
  -webkit-text-stroke: 0.500px #fff;
`;

const SearchBox = styled.div`
  width: 487px;
  height: 42px;
  flex: none;
  margin: 40px 0 55.500px 168.500px;
  border-radius: 5px;
  background: #3a393c;
  display: flex;
  align-items: center;
  padding-left: 13.500px;
  gap: 9px;
  font-family: "DejaVu Sans", sans-serif;
`;

const Sites = styled.div`
  display: flex;
  padding-left: 119.500px;
`;

const Site = styled.div`
  width: 97.400px;
  display: flex;
  flex-direction: column;
  align-items: center;
  gap: 6.500px;
`;

const Tile = styled.div`
  width: 65px;
  height: 65px;
  border-radius: 5px;
  background: #42414d;
  display: flex;
  align-items: center;
  justify-content: center;
`;

const Art = ({ bg, children }: { bg: string; children: React.ReactNode }) => (
  <svg width="39" height="39" viewBox="0 0 39 39">
    <rect width="39" height="39" rx="2.500" fill={bg} />
    {children}
  </svg>
);

const sites: { name: string; art: React.ReactNode }[] = [
  {
    name: "localhost",
    art: (
      <Art bg="#ff7139">
        <path d="M5.500 7.500l9-1.500L19.500 35l18-2.500V39H11z" fill="#fff" />
      </Art>
    ),
  },
  { name: "mail.google", art: <GmailM w={25} h={18} /> },
  {
    name: "Wikipedia",
    art: (
      <Art bg="#fff">
        <defs>
          <radialGradient id="wk" cx=".4" cy=".35" r=".7">
            <stop offset="0" stopColor="#f2f2f2" />
            <stop offset=".7" stopColor="#bdbdbd" />
            <stop offset="1" stopColor="#808080" />
          </radialGradient>
        </defs>
        <path d="M9 9l3 1 2-3 3 2 5-2 3 2 4 0c3 3 5.500 7 5.500 11 0 8-6 14-14.500 14S5 28 5 20c0-4 1.500-8 4-11z" fill="url(#wk)" />
        <path d="M9 13l5 1 3-2 2 3-3 1-2-1-5 1zM20 9l2 3 4 0" stroke="#555" fill="#555" strokeWidth=".7" />
        <path d="M13 7v9c0 6 3 13 7 18M26 9c2 8 2 16-1 24M6 18c9 3 19 3 28 0M7 27c8 2 17 2 25 0" stroke="#999" fill="none" strokeWidth=".6" />
        <path d="M12 19h3M13.500 19v3M20 20l2 3M22 20l-2 3M28 18v4M15 26h3v3M24 26l2 2" stroke="#555" fill="none" strokeWidth=".8" />
      </Art>
    ),
  },
  {
    name: "YouTube",
    art: (
      <Art bg="#fff">
        <rect x="5" y="9" width="29.500" height="21" rx="4.500" fill="#f00" />
        <path d="M16.500 15v9l7.500-4.500z" fill="#fff" />
      </Art>
    ),
  },
  {
    name: "avito",
    art: (
      <Art bg="#fff">
        <circle cx="14" cy="13.700" r="4.900" fill="#0af" />
        <circle cx="25.300" cy="13.700" r="3.800" fill="#ff6163" />
        <circle cx="14.200" cy="24.800" r="2.800" fill="#a169f7" />
        <circle cx="25" cy="25" r="6" fill="#97cf26" />
      </Art>
    ),
  },
  {
    name: "aliexpress",
    art: (
      <Art bg="#f03a12">
        <path d="M28 12l11 11v13.500a2.500 2.500 0 0 1-2.500 2.500H24L15 28z" fill="#d92f10" opacity=".6" />
        <path d="M12.500 12.500c1 9.500 14 9.500 15 0" fill="none" stroke="#fff" strokeWidth="1.500" />
        <circle cx="12.500" cy="12.300" r="1.100" fill="#fff" />
        <circle cx="27.500" cy="12.300" r="1.100" fill="#fff" />
        <text x="19.500" y="28.500" fontSize="4.800" fontWeight="400" fill="#fff" textAnchor="middle" fontFamily="Open Sans, sans-serif" textLength="22">AliExpress</text>
      </Art>
    ),
  },
];

const KaliDesktop = () => (
  <Desktop>
    <DesktopPanel />
    <TitleBar>
      <Cell $w={30}><FirefoxLogo w={12} id="fw" /></Cell>
      <TitleText><Label $size={9.6} $track={-0.2} $bold>Mozilla Firefox</Label></TitleText>
      <Spacer />
      <Round />
      <Round />
      <Round $close><Cross w={6} color="#111826" sw={1.800} /></Round>
    </TitleBar>
    <FxTabs>
      <FxTab $w={184}>
        <Cell $w={10} />
        <GmailM w={12} h={9} />
        <Cell $w={3} />
        <FadedTitle><Label $size={12} $track={-0.12} $color="#d9dae0">(без темы) - www777ggg</Label></FadedTitle>
        <Cell $w={15}><Cross w={7} color="#d0d1d7" sw={1.200} /></Cell>
      </FxTab>
      <FxTab $w={184}>
        <Cell $w={8} />
        <Label $size={11.9} $track={-0.28} $color="#d9dae0">Приветствие</Label>
        <Spacer />
        <Cell $w={33}><Cross w={7} color="#d0d1d7" sw={1.200} /></Cell>
      </FxTab>
      <FxTab $w={179} $active>
        <Cell $w={24}><FirefoxLogo w={13} id="fn" /></Cell>
        <Label $size={12} $track={-0.3} $color="#e3e4e9">New Tab</Label>
        <Spacer />
        <Cell $w={26}><Cross w={7} color="#d0d1d7" sw={1.200} /></Cell>
      </FxTab>
      <Cell $w={36}><Plus w={10} color="#e0e1e6" sw={1.100} /></Cell>
    </FxTabs>
    <FxNav>
      <NavRow>
        <Cell $w={5} />
        <Cell $w={29}>
          <Icon w={12} box="0 0 12 12" color="#94969c" sw={1.100}>
            <path d="M11.300 6H.8M5 1.700L.7 6 5 10.300" />
          </Icon>
        </Cell>
        <Cell $w={29}>
          <Icon w={12} box="0 0 12 12" color="#94969c" sw={1.100}>
            <path d="M.7 6h10.500M7 1.700L11.300 6 7 10.300" />
          </Icon>
        </Cell>
        <Cell $w={29}>
          <Icon w={12} box="0 0 12 12" color="#eeeff2" sw={1.300}>
            <path d="M10.700 6.800A4.900 4.900 0 1 1 9.600 2.800M11 .8v3.400H7.600z" />
          </Icon>
        </Cell>
        <Cell $w={29}>
          <Icon w={12} box="0 0 12 12" color="#eeeff2" sw={1.200}>
            <path d="M.8 6L6 .9 11.200 6M1.700 5.500v5.700h8.600V5.500M4.800 11V7.500h2.400V11" />
          </Icon>
        </Cell>
        <Spacer />
        <Cell $w={29}>
          <Icon w={12} h={11} box="0 0 12 11" color="#e8e9ed" sw={1.200}>
            <path d="M.8 1.500c0-.5.300-.7.700-.7h9c.4 0 .7.200.7.700v3.300c0 7-10.400 7-10.400 0zM3.500 4L6 6.300 8.500 4" />
          </Icon>
        </Cell>
        <Cell $w={29}>
          <Icon w={13} h={12} box="0 0 13 12" color="#2d80ff" sw={1.200}>
            <path d="M6.500.7v7M3.300 4.800l3.200 3.100 3.200-3.100M.8 8v2c0 .7.500 1.200 1.200 1.200h9c.7 0 1.200-.5 1.200-1.200V8" />
          </Icon>
        </Cell>
        <Cell $w={30}>
          <Icon w={11} h={9} box="0 0 11 9" color="#eeeff2" sw={1.200}>
            <path d="M.7 1h9.600M.7 4.500h9.600M.7 8h9.600" />
          </Icon>
        </Cell>
        <Cell $w={6} />
      </NavRow>
      <BookmarkRow>
        <svg width="13" height="13" viewBox="0 0 22 22"><DragonLines color="#111" /></svg>
        <Cell $w={3} />
        <Label $size={11.6} $track={-0.2} $color="#e6e7eb">Kali Linux</Label>
        <Cell $w={10} />
        <svg width="13" height="13" viewBox="0 0 22 22">
          <circle cx="11" cy="11" r="11" fill="#2f7df0" />
          <DragonLines color="#dce9ff" />
          <rect x="1" y="12" width="9" height="9" rx="1.500" fill="#d93a3a" />
          <path d="M3.500 16.500h4M5.500 14v5" stroke="#fff" />
        </svg>
        <Cell $w={3} />
        <Label $size={11.6} $track={-0.1} $color="#e6e7eb">Kali Tools</Label>
        <Cell $w={12} />
        <svg width="5" height="12" viewBox="0 0 5 12"><rect width="5" height="10" fill="#a01648" /></svg>
        <Spacer />
        <Label $size={11.6} $color="#e6e7eb">ec</Label>
        <Cell $w={129} />
      </BookmarkRow>
      <UrlDropdown />
    </FxNav>
    <NewTabPage>
      <TopCorner><Gear w={14} color="#cfcfd4" sw={1.800} /></TopCorner>
      <LogoRow>
        <FirefoxLogo w={64} id="fb" />
        <WordMark>Firefox</WordMark>
      </LogoRow>
      <SearchBox>
        <GoogleG w={20} />
        <Label $size={12.2} $track={-0.02} $color="#7b7a80">Search with Google or enter address</Label>
      </SearchBox>
      <Sites>
        {sites.map((s) => (
          <Site key={s.name}>
            <Tile>{s.art}</Tile>
            <Label $size={11.5} $track={-0.12} $color="#d0d0d6">{s.name}</Label>
          </Site>
        ))}
      </Sites>
    </NewTabPage>
  </Desktop>
);

/* ---------- Windows taskbar ---------- */

const TaskBar = styled.div`
  height: 27px;
  flex: none;
  display: flex;
  align-items: center;
  background: linear-gradient(90deg, #22353e, #243a41 45%, #203139);
  color: #e8eef0;
`;

const TaskSearch = styled.div`
  width: 192px;
  height: 27px;
  flex: none;
  display: flex;
  align-items: center;
  background: #f2f2f2;
  border-bottom: 1px solid #9aa0a2;
`;

const TaskApp = styled(Cell)<{ $open?: boolean; $focus?: boolean }>`
  border-bottom: 1px solid ${(p) => (p.$open || p.$focus ? "#76b9ed" : "transparent")};
  background: ${(p) => (p.$focus ? "#51656d" : "transparent")};
`;

const Clock = styled.div`
  width: 44px;
  display: flex;
  flex-direction: column;
  align-items: center;
  line-height: 12px;
`;

const Castle = () => (
  <svg width="46" height="25" viewBox="0 0 46 25">
    <ellipse cx="24" cy="22" rx="19" ry="2.500" fill="#9ed3e8" />
    <path d="M2 19c6-4 10-7 18-10l10 1c6 3 9 6 14 9-4 3-36 3.500-42 0z" fill="#6f8a3a" />
    <path d="M1 18.500c14 1.500 30 1.500 44 0-4 4-38 4.500-44 0z" fill="#c98d4e" />
    <path d="M11 15l3-5h4V6h3V3h5v3h4l2 5h5v4l-5 2-10-1z" fill="#d5a46a" />
    <path d="M12 8h4v3h-4zM17 4h3v3h-3zM22 1h3v4h-3zM29 5h4v3h-4z" fill="#b4533b" />
    <path d="M13 12h5v2h-5zM20 8h5v2h-5zM27 10h6v2h-6zM31 14h8v2h-8z" fill="#a3563a" />
    <path d="M32 16h6v3h-6zM18 14h5v3h-5z" fill="#ecca92" />
    <path d="M5 18l2-6 2 6zM9 16l2-6 2 6zM39 18l2-5 2 5z" fill="#3f6128" />
    <circle cx="17" cy="17.500" r="2.300" fill="#4f7430" />
    <circle cx="26" cy="18" r="2.200" fill="#3f6529" />
    <circle cx="28" cy="13.500" r="1.600" fill="#5a7d32" />
  </svg>
);

const NoticeIcon = () => (
  <svg width="17" height="17" viewBox="0 0 17 17">
    <path d="M1 1h11v8.500H6L3.500 12V9.500H1z" fill="#fff" />
    <path d="M3 3.500h7M3 5.300h7M3 7.100h5" stroke="#23353c" strokeWidth=".8" />
    <circle cx="11.300" cy="11" r="5.200" fill="#2c3c43" stroke="#cfd5d8" strokeWidth=".7" />
    <text x="11.300" y="14.100" fontSize="8.500" fontWeight="700" fill="#fff" textAnchor="middle" fontFamily="Open Sans, sans-serif">2</text>
  </svg>
);

const WindowsTaskBar = () => (
  <TaskBar>
    <Cell $w={32}>
      <svg width="11" height="11" viewBox="0 0 11 11" fill="#fff">
        <path d="M0 1.500l4.700-.7v4.400H0zM5.300.7L11 0v5.200H5.300zM0 5.800h4.700v4.400L0 9.500zM5.300 5.800H11V11l-5.700-.7z" />
      </svg>
    </Cell>
    <TaskSearch>
      <Cell $w={27}>
        <Icon w={12} box="0 0 12 12" color="#222" sw={1}>
          <circle cx="7.300" cy="4.500" r="3.700" />
          <path d="M4.600 7.200L.8 11.200" />
        </Icon>
      </Cell>
      <Label $size={10.3} $track={-0.15} $color="#3c3c3c">Поиск</Label>
      <Spacer />
      <Castle />
      <Cell $w={3} />
    </TaskSearch>
    <TaskApp $w={32}>
      <Icon w={12} h={11} box="0 0 12 11" color="#f0f4f5" sw={1}>
        <path d="M1 .5v1.200h6V.5M1 10.500V9.300h6v1.200M1 3.800h6v3.400H1zM10.500.5v2M10.500 5.500v5M10 4.300h1" />
      </Icon>
    </TaskApp>
    <TaskApp $w={36}>
      <svg width="14" height="12" viewBox="0 0 14 12">
        <path d="M0 .5h5l1 1.300h8V11H0z" fill="#e8b040" />
        <rect x="0" y="3" width="14" height="8" fill="#ffdb70" />
        <path d="M2.500 11.700V7.500c0-.6.400-1 1-1h7c.6 0 1 .4 1 1v4.200h-2.500V9H5v2.700z" fill="#3f94d8" />
      </svg>
    </TaskApp>
    <Cell $w={1} />
    <TaskApp $w={27} $open>
      <svg width="16" height="16" viewBox="0 0 16 16">
        <circle cx="8" cy="8" r="8" fill="#34a853" />
        <path d="M14.900 4A8 8 0 0 1 8 16l3.500-6L8 4z" fill="#fbbc04" />
        <path d="M1.100 4A8 8 0 0 1 14.900 4H8L4.500 10z" fill="#ea4335" />
        <circle cx="8" cy="8" r="4" fill="#fff" />
        <circle cx="8" cy="8" r="3.100" fill="#4285f4" />
      </svg>
    </TaskApp>
    <Cell $w={3} />
    <TaskApp $w={32} $focus>
      <svg width="17" height="16" viewBox="0 0 17 16">
        <defs>
          <linearGradient id="edg" x1="0" y1=".3" x2="1" y2=".4">
            <stop offset="0" stopColor="#2490d8" />
            <stop offset=".55" stopColor="#30bdd0" />
            <stop offset="1" stopColor="#66d45a" />
          </linearGradient>
        </defs>
        <circle cx="9" cy="8" r="8" fill="#1673c4" />
        <path d="M1.200 7A8 8 0 0 1 17 8c0 3-2.300 4-4.500 4S9.500 11 10 10c1.500-2.500-1-4.500-3.500-4.500S2 6 1.200 7z" fill="url(#edg)" />
        <rect x="0" y="9" width="9" height="6.500" rx=".8" fill="#d9822b" />
        <path d="M3 9V7.800h3V9M0 12h9" stroke="#8a4a12" fill="none" />
      </svg>
    </TaskApp>
    <Cell $w={4} />
    <TaskApp $w={26} $open>
      <svg width="16" height="16" viewBox="0 0 16 16">
        <circle cx="8" cy="8" r="8" fill="#5865f2" />
        <path d="M5 4.800c2-.7 4-.7 6 0 1 1.700 1.700 3.600 1.600 5.600-.8.600-1.700 1-2.500 1.100l-.6-1c-1 .2-2 .2-3 0l-.6 1c-.8-.1-1.700-.5-2.500-1.100C3.300 8.400 4 6.500 5 4.800z" fill="#fff" />
        <circle cx="6.300" cy="8.300" r="1" fill="#5865f2" />
        <circle cx="9.700" cy="8.300" r="1" fill="#5865f2" />
      </svg>
    </TaskApp>
    <Spacer />
    <Cell $w={16}>
      <Icon w={8} h={5} box="0 0 8 5" color="#eef2f3" sw={1}>
        <path d="M.6 4.200L4 .8l3.400 3.400" />
      </Icon>
    </Cell>
    <Cell $w={16}>
      <Icon w={11} h={10} box="0 0 11 10" color="#dfe5e7" sw={0.9}>
        <path d="M4 2h6.500v5H3.800M6 9h3M.7.700h2.600v2.500H.7zM2 3.200v5" />
      </Icon>
    </Cell>
    <Cell $w={16}>
      <Icon w={12} h={10} box="0 0 12 10" color="#dfe5e7" sw={0.9}>
        <path d="M.6 3.500h1.600L4.500 1.300v7.400L2.200 6.500H.6zM6.200 3.500c.7 1 .7 2 0 3M8 2.200c1.500 1.600 1.500 4 0 5.600M9.800 1c2.200 2.500 2.200 5.500 0 8" />
      </Icon>
    </Cell>
    <Cell $w={24}><Label $size={8.6} $track={-0.6}>ENG</Label></Cell>
    <Clock>
      <Label $size={8.4} $track={-0.5}>9:26</Label>
      <Label $size={8.4} $track={-0.55}>11.07.2024</Label>
    </Clock>
    <Cell $w={31}><NoticeIcon /></Cell>
    <Cell $w={4} />
  </TaskBar>
);

export default function App() {
  return (
    <Screen>
      <GlobalStyle />
      <EdgeTabStrip />
      <EdgeToolbar />
      <Body>
        <PageColumn>
          <PnetBar>
            <PnetTab $w={37}>DC_1<Cross w={5} color="#666" sw={1.600} /></PnetTab>
            <PnetTab $w={39}>DC_2<Cross w={5} color="#666" sw={1.600} /></PnetTab>
            <PnetTab $w={42}>Win10<Cross w={5} color="#666" sw={1.600} /></PnetTab>
            <PnetTab $w={37}>Win7<Cross w={5} color="#666" sw={1.600} /></PnetTab>
            <PnetTab $w={40} $active>Linux<Cross w={5} color="#8a5c14" sw={1.600} /></PnetTab>
          </PnetBar>
          <Stage>
            <KaliDesktop />
          </Stage>
        </PageColumn>
        <EdgeSideBar />
      </Body>
      <WindowsTaskBar />
    </Screen>
  );
}
